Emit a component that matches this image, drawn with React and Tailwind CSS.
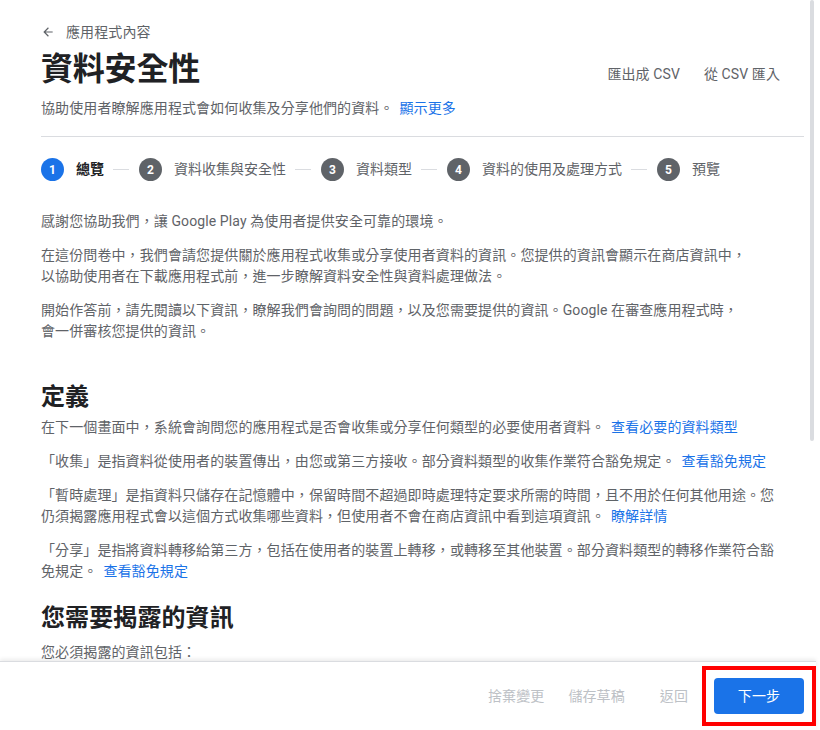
import React from 'react';

const steps = [
    { n: 1, label: '總覽', active: true },
    { n: 2, label: '資料收集與安全性' },
    { n: 3, label: '資料類型' },
    { n: 4, label: '資料的使用及處理方式' },
    { n: 5, label: '預覽' },
];

const Link = ({ children }) => (
    <a href="#" className="text-[#1a73e8] ml-[6px]">{children}</a>
);

const Stepper = () => (
    <div className="flex items-center tracking-normal">
        {steps.map((s, i) => (
            <React.Fragment key={s.n}>
                {i > 0 && <div className="h-px w-4 bg-[#dadce0] ml-[9px] mr-[10px]" />}
                <div className="flex items-center gap-3">
                    <div className={`w-[23px] h-[23px] rounded-full flex items-center justify-center text-white text-[12px] font-bold ${s.active ? 'bg-[#1a73e8]' : 'bg-[#5f6368]'}`}>
                        {s.n}
                    </div>
                    <span className={`text-[14px] ${s.active ? 'text-[#202124] font-bold' : 'text-[#5f6368]'}`}>{s.label}</span>
                </div>
            </React.Fragment>
        ))}
    </div>
);

export default function App() {
    return (
        <div
            className="relative h-[730px] w-[820px] bg-white flex flex-col overflow-hidden tracking-[0.1px]"
            style={{ fontFamily: 'Roboto, "Noto Sans CJK TC", sans-serif' }}
        >
            {/* scrollbar thumb */}
            <div className="absolute right-[6px] top-0 w-[4px] h-[441px] rounded-full bg-[#dadce0]" />

            <main className="flex-1 overflow-hidden pl-[41px] pr-[16px]">
                <div className="w-[763px]">
                    <div className="pt-[22px] flex items-center h-[42px] gap-[11px] text-[14px] leading-5 text-[#5f6368]">
                        <svg width="14" height="14" viewBox="0 0 24 24" className="fill-[#5f6368]">
                            <path d="M20 11H7.83l5.59-5.59L12 4l-8 8 8 8 1.41-1.41L7.83 13H20v-2z" />
                        </svg>
                        <span>應用程式內容</span>
                    </div>

                    <div className="mt-[7px] flex items-end justify-between">
                        <h1 className="text-[32px] leading-[40px] font-bold text-[#202124] tracking-[-0.2px]">資料安全性</h1>
                        <div className="flex items-center h-[30px] text-[14px] text-[#5f6368] mr-[24px]">
                            <button className="px-3">匯出成 CSV</button>
                            <button className="pl-3">從 CSV 匯入</button>
                        </div>
                    </div>

                    <p className="mt-[9px] text-[14px] leading-5 text-[#5f6368]">
                        協助使用者瞭解應用程式會如何收集及分享他們的資料。<Link>顯示更多</Link>
                    </p>

                    <div className="mt-[18px] h-px bg-[#dadce0]" />

                    <div className="pt-[21px]">
                        <Stepper />
                    </div>

                    <div className="mt-[30px] text-[14px] leading-[21px] text-[#5f6368] flex flex-col gap-[13px]">
                        <p>感謝您協助我們，讓 Google Play 為使用者提供安全可靠的環境。</p>
                        <p>
                            在這份問卷中，我們會請您提供關於應用程式收集或分享使用者資料的資訊。您提供的資訊會顯示在商店資訊中，<br />
                            以協助使用者在下載應用程式前，進一步瞭解資料安全性與資料處理做法。
                        </p>
                        <p>
                            開始作答前，請先閱讀以下資訊，瞭解我們會詢問的問題，以及您需要提供的資訊。Google 在審查應用程式時，<br />
                            會一併審核您提供的資訊。
                        </p>
                    </div>

                    <h2 className="mt-[41px] text-[24px] leading-[28px] font-bold text-[#202124]">定義</h2>
                    <div className="mt-[6px] text-[14px] leading-[21px] text-[#5f6368] flex flex-col gap-[13px]">
                        <p>在下一個畫面中，系統會詢問您的應用程式是否會收集或分享任何類型的必要使用者資料。<Link>查看必要的資料類型</Link></p>
                        <p>「收集」是指資料從使用者的裝置傳出，由您或第三方接收。部分資料類型的收集作業符合豁免規定。<Link>查看豁免規定</Link></p>
                        <p>
                            「暫時處理」是指資料只儲存在記憶體中，保留時間不超過即時處理特定要求所需的時間，且不用於任何其他用途。您<br />
                            仍須揭露應用程式會以這個方式收集哪些資料，但使用者不會在商店資訊中看到這項資訊。<Link>瞭解詳情</Link>
                        </p>
                        <p>
                            「分享」是指將資料轉移給第三方，包括在使用者的裝置上轉移，或轉移至其他裝置。部分資料類型的轉移作業符合豁<br />
                            免規定。<Link>查看豁免規定</Link>
                        </p>
                    </div>

                    <h2 className="mt-[22px] text-[24px] leading-[28px] font-bold text-[#202124]">您需要揭露的資訊</h2>
                    <p className="mt-[10px] text-[14px] leading-[21px] text-[#5f6368]">您必須揭露的資訊包括：</p>
                </div>
            </main>

            <footer className="relative z-10 h-[69px] w-[816px] shrink-0 bg-white border-t border-[#dadce0] shadow-[0_-2px_4px_rgba(0,0,0,0.08)] flex items-center justify-end pr-[12px] text-[14px]">
                <button className="px-3 text-[#bdc1c6]">捨棄變更</button>
                <button className="px-3 text-[#bdc1c6]">儲存草稿</button>
                <button className="ml-[11px] px-3 text-[#bdc1c6]">返回</button>
                <div className="relative ml-[14px]">
                    <button className="w-[90px] h-[36px] rounded-[4px] bg-[#1a73e8] text-white">下一步</button>
                    <div className="absolute -inset-[12px] border-4 border-[#ff0000] pointer-events-none" />
                </div>
            </footer>
        </div>
    );
}
